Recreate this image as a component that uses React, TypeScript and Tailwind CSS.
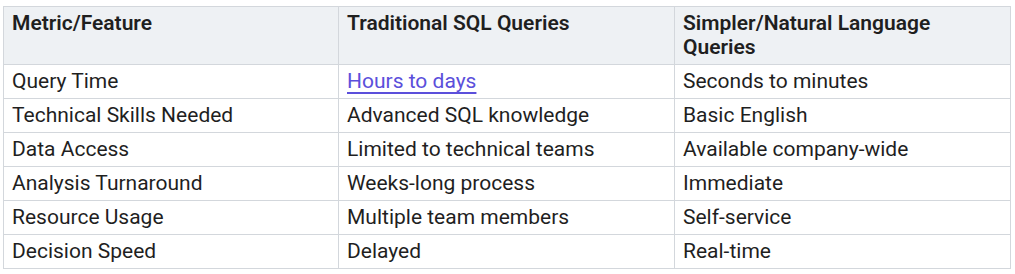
import React from 'react';

const ROWS: [string, string, string][] = [
  ['Query Time', 'Hours to days', 'Seconds to minutes'],
  ['Technical Skills Needed', 'Advanced SQL knowledge', 'Basic English'],
  ['Data Access', 'Limited to technical teams', 'Available company-wide'],
  ['Analysis Turnaround', 'Weeks-long process', 'Immediate'],
  ['Resource Usage', 'Multiple team members', 'Self-service'],
  ['Decision Speed', 'Delayed', 'Real-time'],
];

const App: React.FC = () => {
  return (
    <div className="bg-white w-[1015px] h-[274px] pt-[6px] pl-[3px] font-['Roboto',sans-serif] text-[21px] leading-[24px] text-[#1f1f1f]">
      <table className="border-collapse w-[1008px] table-fixed">
        <thead>
          <tr className="bg-[#eef1f4]">
            <th className="border border-[#d3d7dc] px-[8px] pt-[4px] pb-[5px] text-left align-top font-semibold w-[335px]">Metric/Feature</th>
            <th className="border border-[#d3d7dc] px-[8px] pt-[4px] pb-[5px] text-left align-top font-semibold w-[336px]">Traditional SQL Queries</th>
            <th className="border border-[#d3d7dc] px-[8px] pt-[4px] pb-[5px] text-left align-top font-semibold">Simpler/Natural Language Queries</th>
          </tr>
        </thead>
        <tbody>
          {ROWS.map(([a, b, c], i) => (
            <tr key={a}>
              <td className="border border-[#d3d7dc] px-[8px] pt-[4px] pb-[5px]">{a}</td>
              <td className="border border-[#d3d7dc] px-[8px] pt-[4px] pb-[5px]">
                {i === 0 ? <a href="#" className="text-[#5b4fdb] underline underline-offset-[4px]">{b}</a> : b}
              </td>
              <td className="border border-[#d3d7dc] px-[8px] pt-[4px] pb-[5px]">{c}</td>
            </tr>
          ))}
        </tbody>
      </table>
    </div>
  );
};

export default App;
